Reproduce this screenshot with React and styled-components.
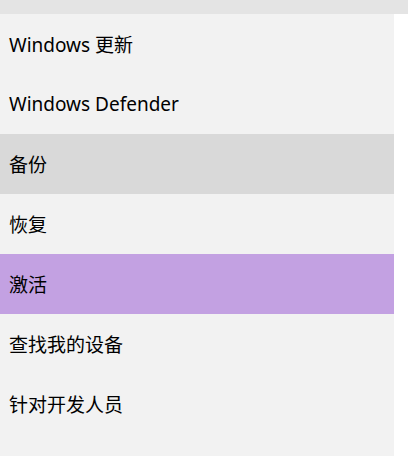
import React from 'react';
import styled, { createGlobalStyle } from 'styled-components';

const GlobalStyle = createGlobalStyle`
  html, body {
    margin: 0;
    padding: 0;
    background: #fff;
  }
  body {
    font-family: "Noto Sans", "Noto Sans CJK SC", sans-serif;
  }
`

const items = [
  { label: 'Windows 更新' },
  { label: 'Windows Defender' },
  { label: '备份', state: 'hover' },
  { label: '恢复' },
  { label: '激活', state: 'active' },
  { label: '查找我的设备' },
  { label: '针对开发人员' },
]

const App = () => {
  return (
    <Page>
      <GlobalStyle />
      <TopBar />
      <Menu>
        {items.map(item => (
          <Item key={item.label} state={item.state}>
            {item.label}
          </Item>
        ))}
      </Menu>
    </Page>
  )
}

export default App

const Page = styled.div`
  display: flex;
  flex-direction: column;
  width: 408px;
  height: 456px;
  overflow: hidden;
`
const TopBar = styled.div`
  height: 14px;
  background-color: #e4e4e4;
`
const Menu = styled.ul`
  flex: 1;
  display: flex;
  flex-direction: column;
  margin: 0;
  padding: 0;
  width: 394px;
  list-style: none;
  background-color: #f2f2f2;
`
const Item = styled.li`
  display: flex;
  align-items: center;
  height: 60px;
  flex-shrink: 0;
  padding-left: 9px;
  font-size: 19px;
  color: #000;
  background-color: ${({ state }) =>
    state === 'active' ? '#c3a1e2' : state === 'hover' ? '#d9d9d9' : 'transparent'};
`
